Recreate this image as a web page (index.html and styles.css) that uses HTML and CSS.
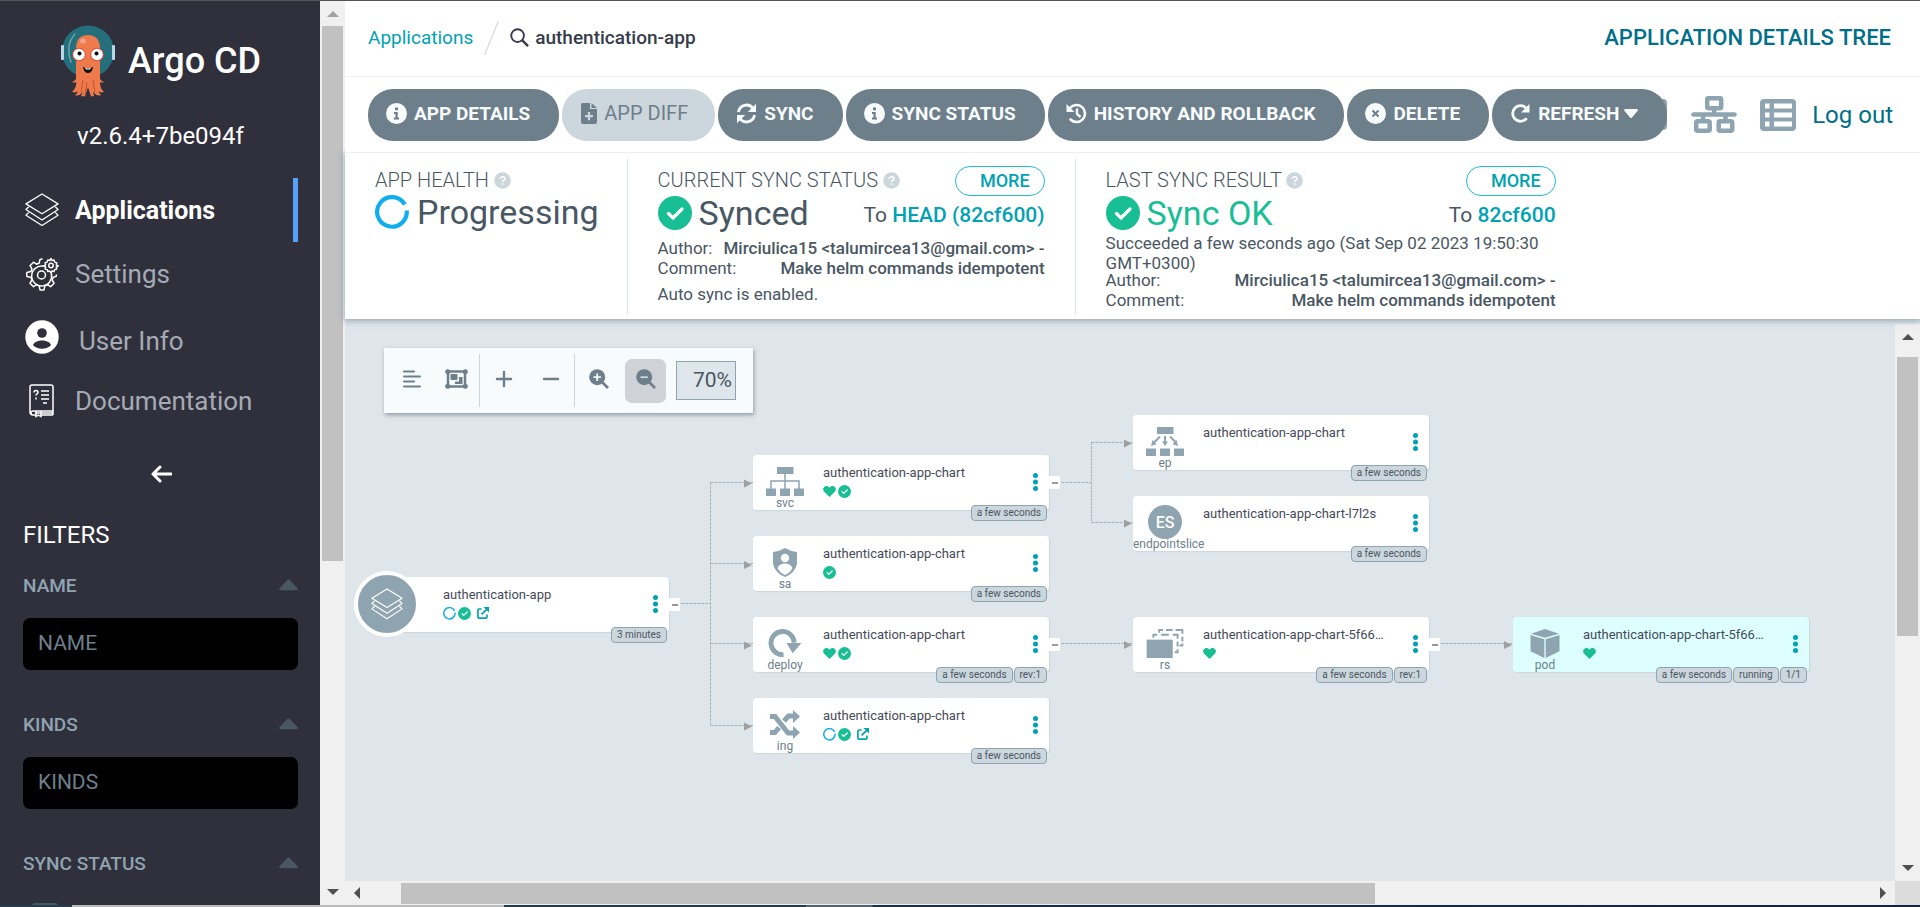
FILE: index.html
```html
<!DOCTYPE html>
<html lang="en">
<head>
<meta charset="utf-8">
<title>authentication-app - Application Details Tree - Argo CD</title>
<link rel="stylesheet" href="styles.css">
</head>
<body>
<svg class="defs" aria-hidden="true">
  <symbol id="stack" viewBox="0 0 36 36"><g fill="none" stroke="currentColor" stroke-width="1.300" stroke-linejoin="round"><path d="M18 1 35 11.500 18 22 1 11.500z"/><path d="M4 14.500 1 17.500 18 28.500 35 17.500 32 14.500"/><path d="M4 20.500 1 23.500 18 34.500 35 23.500 32 20.500"/></g></symbol>
  <symbol id="gears" viewBox="0 0 34 34"><g fill="none" stroke="currentColor" stroke-width="1.500" stroke-linejoin="round" stroke-linecap="round"><path d="M17 2l-2 .5-.8 3.500-2.700 1.200-3-2-3.500 3.500 2 3.200-1.200 2.700-4 .8v4l4 .8 1.200 2.800-2 3.200 3.500 3.500 3-2 2.700 1.200.8 4h4l.9-4 2.700-1.200 3 2 3.500-3.500-2-3.200 1.200-2.800 3-.8V18"/><path d="M18 9a10 10 0 1 0 8.500 8"/><circle cx="16.500" cy="18" r="4"/><circle cx="26" cy="8.500" r="2.200"/><path d="M26 1.500l1 2 2-.4.700 2 2 .700-.4 2 2 1-2 1.200.4 2-2 .6-.7 2-2-.5-1 2-1.200-2-2 .5-.7-2-2-.6.500-2-2-1.200 2-1-.5-2 2-.7.700-2 2 .4z"/></g></symbol>
  <symbol id="user" viewBox="0 0 34 34"><mask id="um"><rect width="34" height="34" fill="#fff"/><circle cx="17" cy="13" r="4.800" fill="#000"/><path d="M8 25c2-6 16-6 18 0-4 5-14 5-18 0z" fill="#000"/></mask><circle cx="17" cy="17" r="16.700" fill="currentColor" mask="url(#um)"/></symbol>
  <symbol id="book" viewBox="0 0 26 34"><g fill="none" stroke="currentColor" stroke-width="1.500"><path d="M24 27V3a2 2 0 0 0-2-2H3a2 2 0 0 0-2 2v25a3 3 0 0 0 3 3h3M24 27H4a2 2 0 0 0 0 4M12 31h12M24 27v4M6 29h18"/><path d="M7 27v5.500l2.500-1.500 2.500 1.500V27M12 7h8M12 11h8M12 15h8M14 19h4"/><path d="M5 8.500q0-2 2-2t2 1.800c0 1.700-2 1.500-2 3.200M7 13.500v2"/></g></symbol>
  <symbol id="left" viewBox="0 0 22 18"><path d="M10 2 3 9l7 7M3 9h18" fill="none" stroke="currentColor" stroke-width="3" stroke-linecap="round" stroke-linejoin="round"/></symbol>
  <symbol id="caret" viewBox="0 0 20 12"><path d="M9 .5q1-.8 2 0l8.500 9q1 2-1.500 2H2q-2.500 0-1.500-2z" fill="currentColor"/></symbol>
  <symbol id="search" viewBox="0 0 20 20"><circle cx="8" cy="8" r="6.700" fill="none" stroke="currentColor" stroke-width="2"/><path d="m13 13 6 6" stroke="currentColor" stroke-width="2.600"/></symbol>
  <symbol id="info" viewBox="0 0 21 21"><path fill-rule="evenodd" fill="currentColor" d="M10.500 0a10.500 10.500 0 1 1 0 21 10.500 10.500 0 0 1 0-21zM9 4.500v2.700h3V4.500zM8 9v2h1.500v3.500H8v2h5v-2h-1.300V9z"/></symbol>
  <symbol id="diff" viewBox="0 0 16 21"><path fill-rule="evenodd" fill="currentColor" d="M2 0h7v6h7v13q0 2-2 2H2q-2 0-2-2V2q0-2 2-2zm4.900 9v3H4v2.200h2.900v3h2.200v-3H12V12H9.100V9z"/><path fill="currentColor" d="M10.500 0 16 5h-5.500z"/></symbol>
  <symbol id="sync" viewBox="0 0 21 21"><path d="M2.500 9a8 8 0 0 1 14.500-3.500M18.500 12A8 8 0 0 1 4 15.500" fill="none" stroke="currentColor" stroke-width="2.800"/><path fill="currentColor" d="M20 .8V9h-8.200zM1 20.200V12h8.200z"/></symbol>
  <symbol id="history" viewBox="0 0 21 21"><path d="M4 5a8.500 8.500 0 1 1 .5 11.500" fill="none" stroke="currentColor" stroke-width="2.600" stroke-linecap="round"/><path fill="currentColor" d="M.5 1v8h8z"/><path d="M11 5.500v5.500l3.500 3" fill="none" stroke="currentColor" stroke-width="2.400"/></symbol>
  <symbol id="cross" viewBox="0 0 21 21"><circle cx="10.500" cy="10.500" r="10.500" fill="currentColor"/><path d="m7.500 7.500 6 6m0-6-6 6" stroke="#6d7f8b" stroke-width="2"/></symbol>
  <symbol id="redo" viewBox="0 0 21 21"><path d="M16.500 5.500A7.800 7.800 0 1 0 16 16" fill="none" stroke="currentColor" stroke-width="2.800" stroke-linecap="round"/><path fill="currentColor" d="M19.500 1v8.500H11z"/></symbol>
  <symbol id="down" viewBox="0 0 14 9"><path d="M1 0h12q1.500.5.5 2L8 8.500q-1 1-2 0L.5 2Q-.5.500 1 0z" fill="currentColor"/></symbol>
  <symbol id="help" viewBox="0 0 17 17"><circle cx="8.500" cy="8.500" r="8.300" fill="currentColor"/><path d="M6 6.700q.3-2 2.600-2 2.400.1 2.400 2 0 1.300-2.400 2.500v.8M8.600 11.300v1.700" fill="none" stroke="#fff" stroke-width="1.600"/></symbol>
  <symbol id="tree" viewBox="0 0 46 37"><g fill="none" stroke="currentColor" stroke-width="4.500"><rect x="16.200" y="2.200" width="14" height="10" rx="1.500"/><rect x="5.200" y="25.200" width="13.500" height="9.500" rx="1.500"/><rect x="27.700" y="25.200" width="13.500" height="9.500" rx="1.500"/><path d="M2.500 18.500h41" stroke-linecap="round"/><path d="M23.200 12v6M12 18v7M34.500 18v7"/></g></symbol>
  <symbol id="list" viewBox="0 0 36 32"><path fill-rule="evenodd" fill="currentColor" d="M4 0h28q4 0 4 4v24q0 4-4 4H4q-4 0-4-4V4q0-4 4-4zM5 4.500v5h4.500v-5zm9 0v5h18v-5zm-9 9v5h4.500v-5zm9 0v5h18v-5zm-9 9v5h4.500v-5zm9 0v5h18v-5z"/></symbol>
  <symbol id="spin" viewBox="0 0 34 34"><path d="M29.800 9.500A14.800 14.800 0 1 0 31.700 15.500" fill="none" stroke="#10aeee" stroke-width="4.200"/></symbol>
  <symbol id="spin-s" viewBox="0 0 14 14"><path d="M12.500 4.200A6.100 6.100 0 1 0 13 6" fill="none" stroke="#10aeee" stroke-width="1.600"/></symbol>
  <symbol id="check" viewBox="0 0 34 34"><circle cx="17" cy="17" r="17" fill="#18be94"/><path d="m10.500 17.500 4.500 4.500 9-9" fill="none" stroke="#fff" stroke-width="3.200" stroke-linecap="round" stroke-linejoin="round"/></symbol>
  <symbol id="heart" viewBox="0 0 14 12"><path fill="#18be94" d="M7 12 1 6Q-.8 3.500 1 1.300C3-.6 5.500.2 7 2 8.500.2 11-.6 13 1.300Q14.800 3.500 13 6z"/></symbol>
  <symbol id="ext" viewBox="0 0 13 13"><path d="M5 2.200H2.200q-1.200 0-1.200 1.200v7.400Q1 12 2.200 12h7.400q1.200 0 1.200-1.200V8M5 8l6-6" fill="none" stroke="currentColor" stroke-width="1.800"/><path fill="currentColor" d="M7 0h6v6z"/></symbol>
  <symbol id="dots" viewBox="0 0 5 18"><g fill="currentColor"><circle cx="2.500" cy="2.500" r="2.500"/><circle cx="2.500" cy="9" r="2.500"/><circle cx="2.500" cy="15.500" r="2.500"/></g></symbol>
  <symbol id="svc" viewBox="0 0 38 29"><path fill="currentColor" d="M11 0h16.500v7H11zM0 21.500h10V29H0zM14 21.500h10V29H14zM28 21.500h10V29H28z"/><path d="M19 7v15M5 22v-8h28v8" fill="none" stroke="currentColor" stroke-width="1.500"/></symbol>
  <symbol id="ep" viewBox="0 0 38 29"><path fill="currentColor" d="M11 0h16.500v7H11zM0 21.500h10V29H0zM14 21.500h10V29H14zM28 21.500h10V29H28zM19 19l-3-4.500h6zM5 19l1.500-6 4 4.300zM32 19l-1.500-6-4 4.300z"/><path d="M19 9v7M14 9.500l-6 6M24 9.500l6 6" stroke="currentColor" stroke-width="2"/></symbol>
  <symbol id="sa" viewBox="0 0 24 29"><path fill="currentColor" d="M12 0q6 3.500 12 4v12q-2 9-12 13Q2 25 0 16V4q6-.5 12-4z"/><circle cx="12" cy="10" r="4.200" fill="#fff"/><path fill="#fff" d="M4.500 20q2-4.500 7.500-4.500t7.500 4.500q-2.500 5-7.500 7-5-2-7.500-7z"/></symbol>
  <symbol id="deploy" viewBox="0 0 34 30"><path d="M15.500 26.500A12 12 0 1 1 26.500 14" fill="none" stroke="currentColor" stroke-width="5"/><path fill="currentColor" d="M18.500 14.500H34L25 25z"/></symbol>
  <symbol id="ing" viewBox="0 0 30 29"><path d="M0 6.500h5L18 23h6M0 22.500h5l4-5M14 11l4.500-5H24" fill="none" stroke="currentColor" stroke-width="5"/><path fill="currentColor" d="m23 0 7 6.500-7 6.500zM23 16l7 6.500-7 6.500z"/></symbol>
  <symbol id="rs" viewBox="0 0 38 30"><path fill="currentColor" d="M0 11h27v19H0z"/><path d="M7 9V6h4M15 6h8M27 6h5v4M32 13v5M32 21v3h-3" fill="none" stroke="currentColor" stroke-width="2"/><path d="M13 4V1h4M20 1h7M30 1h7v4M37 8v5" fill="none" stroke="currentColor" stroke-width="2"/><path d="M37 15v2h-3" fill="none" stroke="currentColor" stroke-width="2"/></symbol>
  <symbol id="pod" viewBox="0 0 30 30"><path fill="currentColor" d="m15 0 14.500 4.800L15 9 .5 4.800zM0 6.300l14.300 4.200V30L0 23zM30 6.300l-14.300 4.200V30L30 23z"/></symbol>
</svg>

<div class="page">
  <div class="workspace">
    <nav class="sidebar">
      <div class="brand">
        <svg class="brand-logo" viewBox="0 0 56 72" aria-hidden="true">
          <circle cx="28" cy="26.500" r="26" fill="#256e7c"/>
          <path d="M15 9Q5 20 11 37" fill="none" stroke="#6aa3a8" stroke-width="1.500" stroke-linecap="round"/>
          <rect x="1" y="20" width="3" height="15" rx="1" fill="#b8d6e8"/><rect x="52" y="20" width="3" height="15" rx="1" fill="#b8d6e8"/>
          <path fill="#ef7b4d" d="M16 24Q16 10 28 10t12 14v30q1 2 4 3-1 1-4 .3 0 7 4 9.500-3 1.500-6-.5 2 2.500 3 4-5 1-8-4l1 5h-3l-3-9-3 9h-4l2-5q-3 5-8 4 2-1.500 3-4-3 2-6 .5 4-3 4.500-9.500-3 .7-4.500-.3 3-1 4-3z"/>
          <path d="M23 55l-2 12M27 57l-2 13M33 55l2 12" stroke="#c64f2f" stroke-width="1"/>
          <ellipse cx="23" cy="16" rx="3" ry="2.600" fill="#f5a189"/>
          <circle cx="19" cy="29.500" r="6.800" fill="#dd4f38"/><circle cx="37" cy="29.500" r="6.800" fill="#dd4f38"/>
          <circle cx="19" cy="29.500" r="5.800" fill="#fff"/><circle cx="37" cy="29.500" r="5.800" fill="#fff"/>
          <circle cx="19.500" cy="28.500" r="2"/><circle cx="36.500" cy="28.500" r="2"/>
          <path d="M23 42q5 2.500 10 0-1 6-5 6t-5-6z" fill="#12100f"/><path d="M25 42.800q3 1.200 6 0l-1 1.700h-4z" fill="#fff"/>
        </svg>
        <span>Argo CD</span>
      </div>
      <div class="version">v2.6.4+7be094f</div>
      <a class="nav active" href="#apps"><svg class="i36"><use href="#stack"/></svg>Applications</a>
      <a class="nav" href="#settings"><svg class="i36"><use href="#gears"/></svg>Settings</a>
      <a class="nav user" href="#user"><svg class="i36"><use href="#user"/></svg>User Info</a>
      <a class="nav" href="#docs"><svg class="i36"><use href="#book"/></svg>Documentation</a>
      <button class="collapse" aria-label="Collapse sidebar"><svg><use href="#left"/></svg></button>
      <h2 class="filters">FILTERS</h2>
      <section class="filter">
        <label for="f-name">NAME<svg class="caret"><use href="#caret"/></svg></label>
        <input id="f-name" type="text" placeholder="NAME">
      </section>
      <section class="filter">
        <label for="f-kinds">KINDS<svg class="caret"><use href="#caret"/></svg></label>
        <input id="f-kinds" type="text" placeholder="KINDS">
      </section>
      <section class="filter">
        <label for="f-sync">SYNC STATUS<svg class="caret"><use href="#caret"/></svg></label>
        <input class="tick" id="f-sync" type="checkbox">
      </section>
    </nav>

    <div class="bar bar-side"><span class="arr up dim"></span><span class="thumb"></span><span class="arr dn"></span></div>

    <main class="main">
      <header class="crumbs">
        <a href="#apps">Applications</a><span class="slash"></span>
        <svg class="glass"><use href="#search"/></svg><strong>authentication-app</strong>
        <h1>APPLICATION DETAILS TREE</h1>
      </header>

      <div class="actions">
        <button class="btn"><svg class="i21"><use href="#info"/></svg>APP DETAILS</button>
        <button class="btn off" disabled><svg class="i16"><use href="#diff"/></svg>APP DIFF</button>
        <button class="btn"><svg class="i21"><use href="#sync"/></svg>SYNC</button>
        <button class="btn"><svg class="i21"><use href="#info"/></svg>SYNC STATUS</button>
        <button class="btn"><svg class="i21"><use href="#history"/></svg>HISTORY AND ROLLBACK</button>
        <button class="btn"><svg class="i21"><use href="#cross"/></svg>DELETE</button>
        <div class="overlap"><button class="btn last"><svg class="i21"><use href="#redo"/></svg>REFRESH<svg class="down"><use href="#down"/></svg></button></div>
        <div class="views">
          <a href="#tree" aria-label="Tree view"><svg class="v-tree"><use href="#tree"/></svg></a>
          <a href="#list" aria-label="List view"><svg class="v-list"><use href="#list"/></svg></a>
          <a class="logout" href="#logout">Log out</a>
        </div>
      </div>

      <section class="status">
        <div class="cell health">
          <div class="cap">APP HEALTH <svg class="help"><use href="#help"/></svg></div>
          <div class="big"><svg class="i34"><use href="#spin"/></svg>Progressing</div>
        </div>
        <div class="cell current">
          <div class="cap">CURRENT SYNC STATUS <svg class="help"><use href="#help"/></svg><button class="more">MORE</button></div>
          <div class="big sync"><svg class="i34"><use href="#check"/></svg>Synced<span class="to">To <a href="#head">HEAD (82cf600)</a></span></div>
          <dl><div><dt>Author:</dt><dd>Mirciulica15 &lt;talumircea13@gmail.com&gt; -</dd></div><div><dt>Comment:</dt><dd>Make helm commands idempotent</dd></div></dl>
          <p class="auto">Auto sync is enabled.</p>
        </div>
        <div class="cell result">
          <div class="cap">LAST SYNC RESULT <svg class="help"><use href="#help"/></svg><button class="more">MORE</button></div>
          <div class="big ok"><svg class="i34"><use href="#check"/></svg>Sync OK<span class="to">To <a href="#rev">82cf600</a></span></div>
          <p>Succeeded a few seconds ago (Sat Sep 02 2023 19:50:30 GMT+0300)</p>
          <dl><div><dt>Author:</dt><dd>Mirciulica15 &lt;talumircea13@gmail.com&gt; -</dd></div><div><dt>Comment:</dt><dd>Make helm commands idempotent</dd></div></dl>
        </div>
      </section>

      <div class="stage">
        <div class="canvas">
          <div class="tools">
            <button class="near" aria-label="Align"><svg viewBox="0 0 18 18"><path d="M1 1.500h10M1 6.500h16M1 11.500h10M1 16.500h16" stroke="currentColor" stroke-width="2" stroke-linecap="round"/></svg></button>
            <button class="near" aria-label="Group nodes"><svg class="w23" viewBox="0 0 23 20"><path d="M3 2.500h17v15H3z" fill="none" stroke="currentColor" stroke-width="2.500"/><g fill="currentColor"><circle cx="2.700" cy="2.700" r="2.500"/><circle cx="20.300" cy="2.700" r="2.500"/><circle cx="2.700" cy="17.300" r="2.500"/><circle cx="20.300" cy="17.300" r="2.500"/><rect x="5.500" y="5" width="7" height="6" rx="1"/><path d="M14 8h3.500v7H10v-2.500h4z"/></g></svg></button>
            <i class="sep"></i>
            <button aria-label="Expand all"><svg viewBox="0 0 18 18"><path d="M2 9h14M9 2v14" stroke="currentColor" stroke-width="2.400" stroke-linecap="round"/></svg></button>
            <button aria-label="Collapse all"><svg viewBox="0 0 18 18"><path d="M2 9h14" stroke="currentColor" stroke-width="2.400" stroke-linecap="round"/></svg></button>
            <i class="sep"></i>
            <button aria-label="Zoom in"><svg class="w20" viewBox="0 0 20 20"><circle cx="8.200" cy="8.200" r="8" fill="currentColor"/><path d="m12 12 7 7" stroke="currentColor" stroke-width="2.600"/><path d="M4.500 8.200h7.400M8.200 4.500v7.400" stroke="#f8fbfb" stroke-width="1.800"/></svg></button>
            <button class="on" aria-label="Zoom out"><svg class="w20" viewBox="0 0 20 20"><circle cx="8.200" cy="8.200" r="8" fill="currentColor"/><path d="m12 12 7 7" stroke="currentColor" stroke-width="2.600"/><path d="M4.500 8.200h7.400" stroke="#cfd2d7" stroke-width="1.800"/></svg></button>
            <input type="text" value="70%" aria-label="Zoom level">
          </div>

          <svg class="edges" viewBox="0 0 1550 562" aria-hidden="true">
            <path class="edge" d="M336 284.500H366M365.500 163V406M365.500 163.500H408M365.500 244.500H408M365.500 324.500H408M365.500 406.500H408M716 163.500H746M746.500 123V204M746.500 123.500H788M746.500 203.500H788M716 324.500H788M1096 324.500H1168"/>
            <path class="tips" d="M399 160.500l8 4-8 4zM399 242l8 4-8 4zM399 322.500l8 4-8 4zM399 403.500l8 4-8 4zM779 120.500l8 4-8 4zM779 200.500l8 4-8 4zM779 322l8 4-8 4zM1159 322l8 4-8 4z"/>
          </svg>

          <article class="node n-root">
            <div class="kind"></div>
            <div class="body"><b>authentication-app</b><div class="marks"><svg><use href="#spin-s"/></svg><svg><use href="#check"/></svg><svg class="ext"><use href="#ext"/></svg></div></div>
            <button class="menu" aria-label="Actions"><svg><use href="#dots"/></svg></button>
            <div class="orb"><svg><use href="#stack"/></svg></div>
            <div class="tags"><span>3 minutes</span></div><button class="fold" aria-label="Collapse"></button>
          </article>
          <article class="node n-svc">
            <div class="kind"><svg><use href="#svc"/></svg>svc</div>
            <div class="body"><b>authentication-app-chart</b><div class="marks"><svg><use href="#heart"/></svg><svg><use href="#check"/></svg></div></div>
            <button class="menu" aria-label="Actions"><svg><use href="#dots"/></svg></button>
            <div class="tags"><span>a few seconds</span></div><button class="fold" aria-label="Collapse"></button>
          </article>
          <article class="node n-sa">
            <div class="kind"><svg><use href="#sa"/></svg>sa</div>
            <div class="body"><b>authentication-app-chart</b><div class="marks"><svg><use href="#check"/></svg></div></div>
            <button class="menu" aria-label="Actions"><svg><use href="#dots"/></svg></button>
            <div class="tags"><span>a few seconds</span></div>
          </article>
          <article class="node n-deploy">
            <div class="kind"><svg><use href="#deploy"/></svg>deploy</div>
            <div class="body"><b>authentication-app-chart</b><div class="marks"><svg><use href="#heart"/></svg><svg><use href="#check"/></svg></div></div>
            <button class="menu" aria-label="Actions"><svg><use href="#dots"/></svg></button>
            <div class="tags"><span>a few seconds</span><span>rev:1</span></div><button class="fold" aria-label="Collapse"></button>
          </article>
          <article class="node n-ing">
            <div class="kind"><svg><use href="#ing"/></svg>ing</div>
            <div class="body"><b>authentication-app-chart</b><div class="marks"><svg><use href="#spin-s"/></svg><svg><use href="#check"/></svg><svg class="ext"><use href="#ext"/></svg></div></div>
            <button class="menu" aria-label="Actions"><svg><use href="#dots"/></svg></button>
            <div class="tags"><span>a few seconds</span></div>
          </article>
          <article class="node n-ep">
            <div class="kind"><svg><use href="#ep"/></svg>ep</div>
            <div class="body"><b>authentication-app-chart</b></div>
            <button class="menu" aria-label="Actions"><svg><use href="#dots"/></svg></button>
            <div class="tags"><span>a few seconds</span></div>
          </article>
          <article class="node n-es">
            <div class="kind"><span class="es">ES</span><span class="long">endpointslice</span></div>
            <div class="body"><b>authentication-app-chart-l7l2s</b></div>
            <button class="menu" aria-label="Actions"><svg><use href="#dots"/></svg></button>
            <div class="tags"><span>a few seconds</span></div>
          </article>
          <article class="node n-rs">
            <div class="kind"><svg><use href="#rs"/></svg>rs</div>
            <div class="body"><b>authentication-app-chart-5f66…</b><div class="marks"><svg><use href="#heart"/></svg></div></div>
            <button class="menu" aria-label="Actions"><svg><use href="#dots"/></svg></button>
            <div class="tags"><span>a few seconds</span><span>rev:1</span></div><button class="fold" aria-label="Collapse"></button>
          </article>
          <article class="node n-pod">
            <div class="kind"><svg><use href="#pod"/></svg>pod</div>
            <div class="body"><b>authentication-app-chart-5f66…</b><div class="marks"><svg><use href="#heart"/></svg></div></div>
            <button class="menu" aria-label="Actions"><svg><use href="#dots"/></svg></button>
            <div class="tags"><span>a few seconds</span><span>running</span><span>1/1</span></div>
          </article>
        </div>
        <div class="bar bar-v"><span class="arr up"></span><span class="thumb"></span><span class="arr dn"></span></div>
        <div class="bar-h"><span class="arr lf"></span><span class="thumb"></span><span class="arr rt"></span></div>
        <div class="corner"></div>
      </div>
    </main>
  </div>
  <div class="taskbar"></div>
</div>
</body>
</html>
```
FILE: styles.css
```css
* { box-sizing: border-box; }
body, h1, h2, p, dl, dd { margin: 0; }
body { font-family: Roboto, "Liberation Sans", sans-serif; color: #495763; background: #fff; }
a { text-decoration: none; }
button { font-family: inherit; border: 0; padding: 0; background: none; color: inherit; cursor: pointer; }
svg { flex: none; }
.defs { position: absolute; width: 0; height: 0; }

.page { height: 100vh; display: flex; flex-direction: column; border-top: 1px solid #555; overflow: hidden; }
.workspace { flex: 1; min-height: 0; display: grid; grid-template-columns: 320px 25px minmax(0, 1fr); }
.taskbar { height: 2px; background: linear-gradient(90deg, #263d49 72px, #bbb 72px, #bbb 504px, #263d49 504px, #263d49 806px, #51626c 806px, #51626c 872px, #1c3046 873px, #15243f); }

/* Sidebar */
.sidebar { background: #30303d; overflow: hidden; padding: 22px 22px 0 23px; }
.brand { display: flex; justify-content: center; align-items: center; gap: 12px; height: 76px; color: #fff; font-size: 36px; font-weight: 500; }
.brand-logo { width: 56px; height: 72px; }
.version { margin-top: 20px; text-align: center; color: #fff; font-size: 24px; line-height: 34px; margin-bottom: 25px; }
.nav { display: flex; align-items: center; gap: 15px; height: 64px; font-size: 26px; color: #a4abb4; }
.nav svg { color: #fff; width: 36px; height: 34px; }
.nav .i36 { margin-left: 1px; }
.nav.active { color: #fff; font-size: 25px; font-weight: 700; border-right: 5px solid #56a1fb; }
.nav.user { gap: 19px; height: 70px; }
.nav.user svg { margin-bottom: 8px; }
.nav.user + .nav { height: 50px; }
.collapse { display: block; margin: 35px auto 0; height: 26px; color: #fff; }
.collapse svg { width: 22px; height: 18px; display: block; margin: auto; }
.filters { margin-top: 32px; margin-bottom: 22px; color: #fff; font-size: 24px; line-height: 32px; font-weight: 400; }
.filter { margin-bottom: 42px; }
.filter label { display: flex; align-items: center; justify-content: space-between; height: 24px; font-size: 19px; font-weight: 500; color: #8fa4b1; }
.filter .caret { width: 19px; height: 12px; color: #495763; }
.filter input { display: block; width: 100%; height: 52px; margin-top: 21px; padding: 0 15px 3px; border: 0; border-radius: 7px; background: #000; font: 400 21px Roboto, sans-serif; color: #fff; }
.filter input::placeholder { color: #6d7f8b; opacity: 1; }
.filter .tick { appearance: none; width: 26px; height: 26px; margin: 28px 0 0 9px; padding: 0; background: none; border: 2px solid #495763; border-radius: 3px; }

/* Scroll bars */
.bar { display: flex; flex-direction: column; align-items: center; background: #f0f0f0; padding: 10px 2px; }
.bar .thumb { width: 21px; background: #c1c1c1; }
.arr { width: 0; height: 0; border: 6px solid transparent; flex: none; }
.up { border-bottom-color: #505050; border-top: 0; }
.up.dim { border-bottom-color: #a3a3a3; }
.dn { border-top-color: #505050; border-bottom: 0; margin-top: auto; }
.lf { border-right-color: #505050; border-left: 0; }
.rt { border-left-color: #505050; border-right: 0; margin-left: auto; }
.bar-side .thumb { height: 60.5%; margin-top: 9px; min-height: 0; }
.bar-v .thumb { height: 52%; margin-top: 17px; }

/* Header */
.main { display: flex; flex-direction: column; min-height: 0; background: #fff; }
.crumbs { display: flex; align-items: center; height: 76px; padding: 0 29px 2px 23px; border-bottom: 1px solid #eeeff1; font-size: 19px; }
.crumbs a { color: #00a2b3; }
.crumbs strong { color: #363c4a; font-weight: 500; }
.crumbs h1 { margin-left: auto; font-size: 22px; font-weight: 500; color: #006f8a; }
.slash { width: 1px; height: 36px; margin: 0 18px; background: #ccd6dd; transform: rotate(22deg); }
.glass { width: 19px; height: 19px; margin-right: 6px; color: #363c4a; }

.actions { position: relative; z-index: 3; display: flex; align-items: center; gap: 3px; height: 76px; padding: 0 27px 0 23px; border-bottom: 1px solid #eeeff1; background: #fff; }
.btn { display: flex; align-items: center; gap: 7px; height: 52px; padding: 0 29px 3px 18px; border-radius: 25px; background: #6d7f8b; color: #f8fbfb; font-size: 19px; font-weight: 700; white-space: nowrap; }
.btn.off { background: #ccd6dd; color: #6d7f8b; font-size: 20px; font-weight: 400; padding: 0 27px 3px 19px; }
.overlap { position: relative; }
.overlap::before { content: ""; position: absolute; right: 0; top: 10px; width: 20px; height: 31px; border-radius: 4px; background: #8fa4b1; }
.btn.last { position: relative; }
.i21 { width: 21px; height: 21px; }
.i16 { width: 16px; height: 21px; }
.down { width: 14px; height: 9px; margin-left: -2px; }
.views { display: flex; align-items: center; margin-left: auto; color: #8fa4b1; }
.views a { color: inherit; display: flex; }
.v-tree { width: 46px; height: 37px; margin-right: 23px; }
.v-list { width: 36px; height: 32px; margin-right: 16px; }
.views .logout { color: #006f8a; font-size: 24px; }

.status { display: flex; padding: 6px 24px 4px; min-height: 166px; font-size: 17px; line-height: 20px; position: relative; z-index: 2; box-shadow: 0 1px 6px 1px rgba(109,127,139,.6); background: #fff; }
.cell { padding: 0 30px; border-right: 1px solid #dee6eb; }
.health { padding-left: 6px; padding-right: 28px; }
.current { width: 448px; }
.result { width: 510px; border: 0; }
.cap { display: flex; align-items: center; height: 30px; margin-top: 6px; font-size: 20px; font-weight: 300; white-space: pre; }
.help { width: 17px; height: 17px; color: #ccd6dd; }
.more { margin: 1px 0 0 auto; height: 30px; padding: 0 14px 1px 24px; border: 1px solid #1fbccb; border-radius: 15px; color: #00a2b3; font-size: 18px; font-weight: 500; }
.big { display: flex; align-items: center; gap: 8px; height: 34px; font-size: 34px; line-height: 34px; }
.big .i34 { width: 34px; height: 34px; }
.big.sync, .big.ok { gap: 7px; margin-top: 1px; }
.big.ok { color: #18be94; }
.health .big { padding-bottom: 1px; }
.to { margin-left: auto; padding-top: 4px; font-size: 21px; color: #495763; font-weight: 400; }
.to a { color: #00a2b3; font-weight: 500; }
dl div { display: flex; justify-content: space-between; }
dd { font-weight: 500; white-space: nowrap; }
.current dl { margin-top: 8px; }
.auto { margin-top: 6px; }
.result p { margin-top: 3px; }
.result dl { margin-top: -3px; }

/* Resource tree */
.stage { flex: 1; min-height: 0; display: grid; grid-template: minmax(0, 1fr) 24px / minmax(0, 1fr) 25px; background: #dee6eb; }
.canvas { position: relative; overflow: hidden; background: #dee5eb; }
.bar-v { margin-top: 5px; }
.bar-h { display: flex; align-items: center; background: #f0f0f0; padding: 2px 9px; }
.bar-h .thumb { height: 21px; width: 63.6%; margin-left: 41px; background: #c1c1c1; }
.corner { background: #dcdcdc; }

.tools { position: absolute; left: 39px; top: 29px; display: flex; align-items: center; height: 65px; padding: 0 17px 0 5px; background: #f8fbfb; color: #6d7f8b; box-shadow: 1px 2px 4px rgba(109,127,139,.7); }
.tools button { width: 41px; height: 44px; margin: 0 3px; display: grid; place-items: center; border-radius: 7px; padding-bottom: 4px; }
.tools .near { margin: 0 2px; }
.tools button svg { width: 18px; height: 18px; }
.tools button .w23 { width: 23px; height: 20px; }
.tools button .w20 { width: 20px; height: 20px; }
.tools .on { background: #cfd2d7; }
.tools .sep { width: 1px; height: 53px; background: #ccd6dd; }
.tools input { width: 60px; height: 39px; margin-left: 7px; padding: 0 3px 2px 0; border: 1px solid #8fa4b1; background: #dee6eb; color: #495763; font: 400 21px Roboto, sans-serif; text-align: right; }

.edges { position: absolute; left: 0; top: 0; width: 1550px; height: 562px; }
.edge { fill: none; stroke: #a3b5c0; stroke-width: 1; stroke-dasharray: 3 1; }
.tips { fill: #a0a0a0; }

.node { position: absolute; display: flex; width: 296px; height: 55px; border-radius: 4px; background: #fff; box-shadow: 1px 1px 1px #ccd6dd; color: #454b59; font-size: 13px; }
.kind { width: 64px; display: flex; flex-direction: column; align-items: center; justify-content: flex-end; font-size: 12px; line-height: 13px; color: #6d7f8b; }
.kind svg { width: 38px; height: 29px; color: #8fa4b1; margin-bottom: 1px; }
.es { display: grid; place-items: center; width: 34px; height: 34px; margin-bottom: -1px; border-radius: 50%; background: #8fa4b1; color: #fff; font-size: 16px; font-weight: 500; }
.long { align-self: flex-start; }
.body { flex: 1; padding: 10px 0 0 6px; line-height: 16px; white-space: nowrap; }
.body b { font-weight: 400; display: block; }
.marks { display: flex; align-items: center; gap: 2px; margin-top: 3px; height: 14px; }
.marks svg { width: 13px; height: 13px; }
.marks .ext { width: 12px; height: 12px; margin-left: 4px; color: #00a2b3; }
.menu { width: 28px; padding: 0 0 2px; color: #00a2b3; }
.menu svg { width: 5px; height: 18px; display: block; margin: auto; }
.tags { position: absolute; right: 2px; bottom: -11px; display: flex; gap: 1px; }
.tags span { height: 16px; padding: 0 5px; border: 1px solid #8fa4b1; border-radius: 4px; background: #ccd6dd; color: #495763; font-size: 10px; line-height: 14px; }
.fold { position: absolute; left: 100%; top: 21px; width: 11px; height: 13px; background: #fff; display: grid; place-items: center; }
.fold::before { content: ""; width: 6px; height: 2px; background: #999; }
.orb { position: absolute; left: -19px; top: -6px; width: 66px; height: 66px; display: grid; place-items: center; border: 4px solid #fff; border-radius: 50%; background: #8fa4b1; color: #fff; }
.orb svg { width: 32px; height: 32px; }

.n-root { left: 28px; top: 258px; }
.n-svc { left: 408px; top: 136px; }
.n-sa { left: 408px; top: 217px; }
.n-deploy { left: 408px; top: 298px; }
.n-ing { left: 408px; top: 379px; }
.n-ep { left: 788px; top: 96px; }
.n-es { left: 788px; top: 177px; }
.n-rs { left: 788px; top: 298px; }
.n-pod { left: 1168px; top: 298px; background: #dff; }
```
